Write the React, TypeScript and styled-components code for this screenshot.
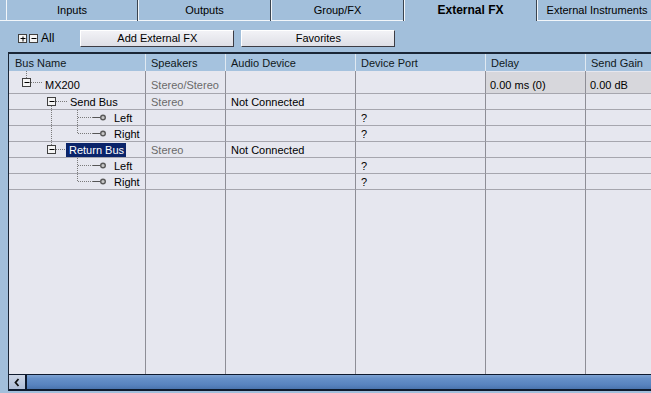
import React from 'react';
import styled, { createGlobalStyle, css } from 'styled-components';

const GlobalStyle = createGlobalStyle`
  html, body { margin: 0; padding: 0; }
  body {
    background: #a2bfdb;
    font-family: "Liberation Sans", Arial, sans-serif;
    font-size: 11px;
    color: #000;
    overflow: hidden;
  }
`;

const Window = styled.div`
  width: 651px;
  height: 393px;
  display: flex;
  flex-direction: column;
  overflow: hidden;
  padding-bottom: 2px;
  box-sizing: border-box;
`;

const TabBar = styled.div`
  display: flex;
  height: 21px;
  flex-shrink: 0;
  padding-left: 6px;
  box-shadow: inset 0 -1px 0 #f2f6fa;
`;

const Tab = styled.div<{ $active?: boolean; $w: number }>`
  width: ${p => p.$w}px;
  flex-shrink: 0;
  box-sizing: border-box;
  border-left: 1px solid #f2f6fa;
  border-right: 1px solid #3a4450;
  display: flex;
  align-items: center;
  justify-content: center;
  padding-bottom: 1px;
  white-space: nowrap;
  overflow: hidden;
  ${p =>
    p.$active &&
    css`
      background: #a2bfdb;
      font-weight: bold;
      font-size: 12px;
    `}
`;

const Toolbar = styled.div`
  display: flex;
  align-items: center;
  height: 16px;
  margin-top: 9px;
  padding-left: 18px;
  flex-shrink: 0;
`;

const AllLabel = styled.span`
  margin-left: 1px;
  font-size: 12px;
`;

const Button = styled.div<{ $gap: number }>`
  width: 154px;
  height: 17px;
  box-sizing: border-box;
  margin-left: ${p => p.$gap}px;
  background: linear-gradient(#f2f2f6, #dedfe6);
  border: 1px solid;
  border-color: #ffffff #3c3c44 #3c3c44 #ffffff;
  display: flex;
  align-items: center;
  justify-content: center;
`;

const Table = styled.div`
  margin-top: 6px;
  margin-left: 8px;
  width: 700px;
  flex: 1;
  display: flex;
  flex-direction: column;
  border-left: 1px solid #1a2636;
  border-top: 2px solid #1a2636;
  background: #e6e7ef;
`;

const cols = '137px 80px 130px 130px 100px 1fr';

const HeaderRow = styled.div`
  display: grid;
  grid-template-columns: ${cols};
  height: 17px;
  background: #a5c2de;
  flex-shrink: 0;
`;

const HeaderCell = styled.div<{ $pad?: number }>`
  border-right: 1px solid #dfe8f1;
  padding-left: ${p => p.$pad ?? 5}px;
  display: flex;
  align-items: center;
  color: #101820;
`;

const Row = styled.div<{ $h: number }>`
  display: grid;
  grid-template-columns: ${cols};
  height: ${p => p.$h}px;
  flex-shrink: 0;
`;

const Cell = styled.div<{ $tall?: boolean; $muted?: boolean }>`
  border-right: 1px solid #8e8e96;
  border-bottom: 1px solid #a6a6ae;
  padding-left: 5px;
  display: flex;
  align-items: center;
  white-space: nowrap;
  overflow: hidden;
  color: ${p => (p.$muted ? '#6a6a6a' : '#000')};
  ${p =>
    p.$tall &&
    css`
      align-items: flex-end;
      padding-bottom: 2px;
    `}
`;

const NameCell = styled(Cell)`
  padding-left: 0;
`;

const ValueCell = styled(Cell)`
  padding: 1px 0 0 0;
  align-items: stretch;
`;

const Field = styled.div`
  flex: 1;
  background: #d7d7dc;
  padding: 0 0 2px 4px;
  display: flex;
  align-items: flex-end;
`;

const Name = styled.span<{ $selected?: boolean }>`
  ${p =>
    p.$selected &&
    css`
      background: #0a246a;
      color: #fff;
      padding: 1px 2px 1px 3px;
    `}
`;

const Filler = styled.div`
  flex: 1;
  display: grid;
  grid-template-columns: ${cols};
`;

const FillCell = styled.div`
  border-right: 1px solid #8e8e96;
`;

const ScrollBar = styled.div`
  height: 17px;
  box-sizing: border-box;
  flex-shrink: 0;
  display: flex;
  border-top: 1px solid #0e1a2e;
  border-bottom: 2px solid #0e1a2e;
  background: linear-gradient(#7ea3d2 0%, #6690c8 25%, #5883bf 70%, #4a74ae 100%);
`;

const ArrowButton = styled.div`
  width: 16px;
  background: linear-gradient(#cdd6e6, #aebdd6);
  border-right: 2px solid #0e1a2e;
  display: flex;
  align-items: center;
  justify-content: center;
`;

const Box = ({ x, y, plus }: { x: number; y: number; plus?: boolean }) => (
  <g>
    <rect x={x} y={y} width={8} height={8} fill="#f4f4f4" stroke="#404040" />
    <line x1={x + 2} y1={y + 4} x2={x + 7} y2={y + 4} stroke="#000" />
    {plus && <line x1={x + 4.5} y1={y + 2} x2={x + 4.5} y2={y + 7} stroke="#000" />}
  </g>
);

const Dot = ({ x1, y1, x2, y2 }: { x1: number; y1: number; x2: number; y2: number }) => (
  <line x1={x1} y1={y1} x2={x2} y2={y2} stroke="#7a7a7a" strokeDasharray="1 1" />
);

const Port = () => (
  <g>
    <line x1={84} y1={7.5} x2={91} y2={7.5} stroke="#555" />
    <circle cx={94} cy={7.5} r={2.3} fill="#c8c8c8" stroke="#5a5a5a" strokeWidth={1.4} />
  </g>
);

type Kind = 'root' | 'bus' | 'lastBus' | 'port' | 'lastPort' | 'port2' | 'lastPort2';

const Tree = ({ kind }: { kind: Kind }) => {
  if (kind === 'root') {
    return (
      <svg width={36} height={22}>
        <Dot x1={17.5} y1={0} x2={17.5} y2={9} />
        <Box x={13.5} y={9.5} />
        <Dot x1={22} y1={13.5} x2={34} y2={13.5} />
      </svg>
    );
  }
  if (kind === 'bus' || kind === 'lastBus') {
    return (
      <svg width={kind === 'bus' ? 61 : 57} height={15}>
        {kind === 'bus' ? <Dot x1={42.5} y1={12} x2={42.5} y2={15} /> : <Dot x1={42.5} y1={0} x2={42.5} y2={3} />}
        <Box x={38.5} y={3.5} />
        <Dot x1={47} y1={7.5} x2={58} y2={7.5} />
      </svg>
    );
  }
  const busLine = kind === 'port' || kind === 'lastPort';
  const lastChild = kind === 'lastPort' || kind === 'lastPort2';
  return (
    <svg width={105} height={15}>
      {busLine && <Dot x1={42.5} y1={0} x2={42.5} y2={15} />}
      <Dot x1={68.5} y1={0} x2={68.5} y2={lastChild ? 7.5 : 15} />
      <Dot x1={69} y1={7.5} x2={84} y2={7.5} />
      <Port />
    </svg>
  );
};

interface BusRow {
  name: string;
  kind: Kind;
  speakers?: string;
  device?: string;
  port?: string;
  selected?: boolean;
}

const rows: BusRow[] = [
  { name: 'Send Bus', kind: 'bus', speakers: 'Stereo', device: 'Not Connected' },
  { name: 'Left', kind: 'port', port: '?' },
  { name: 'Right', kind: 'lastPort', port: '?' },
  { name: 'Return Bus', kind: 'lastBus', speakers: 'Stereo', device: 'Not Connected', selected: true },
  { name: 'Left', kind: 'port2', port: '?' },
  { name: 'Right', kind: 'lastPort2', port: '?' },
];

const tabs = [
  { label: 'Inputs', w: 132 },
  { label: 'Outputs', w: 133 },
  { label: 'Group/FX', w: 133 },
  { label: 'External FX', w: 133, active: true },
  { label: 'External Instruments', w: 120 },
];

const ToggleIcon = ({ plus }: { plus?: boolean }) => (
  <svg width={11} height={9} style={{ display: 'block' }}>
    <Box x={0.5} y={0.5} plus={plus} />
  </svg>
);

const App = () => {
  return (
    <Window>
      <GlobalStyle />
      <TabBar>
        {tabs.map(t => (
          <Tab key={t.label} $w={t.w} $active={t.active}>
            {t.label}
          </Tab>
        ))}
      </TabBar>
      <Toolbar>
        <ToggleIcon plus />
        <ToggleIcon />
        <AllLabel>All</AllLabel>
        <Button $gap={26}>Add External FX</Button>
        <Button $gap={7}>Favorites</Button>
      </Toolbar>
      <Table>
        <HeaderRow>
          <HeaderCell $pad={6}>Bus Name</HeaderCell>
          <HeaderCell>Speakers</HeaderCell>
          <HeaderCell>Audio Device</HeaderCell>
          <HeaderCell>Device Port</HeaderCell>
          <HeaderCell>Delay</HeaderCell>
          <HeaderCell>Send Gain</HeaderCell>
        </HeaderRow>
        <Row $h={23}>
          <NameCell $tall>
            <Tree kind="root" />
            <Name>MX200</Name>
          </NameCell>
          <Cell $tall $muted>Stereo/Stereo</Cell>
          <Cell $tall />
          <Cell $tall />
          <ValueCell>
            <Field>0.00 ms (0)</Field>
          </ValueCell>
          <ValueCell>
            <Field>0.00 dB</Field>
          </ValueCell>
        </Row>
        {rows.map((r, i) => (
          <Row $h={16} key={i}>
            <NameCell>
              <Tree kind={r.kind} />
              <Name $selected={r.selected}>{r.name}</Name>
            </NameCell>
            <Cell $muted>{r.speakers}</Cell>
            <Cell>{r.device}</Cell>
            <Cell>{r.port}</Cell>
            <Cell />
            <Cell />
          </Row>
        ))}
        <Filler>
          <FillCell />
          <FillCell />
          <FillCell />
          <FillCell />
          <FillCell />
          <FillCell />
        </Filler>
        <ScrollBar>
          <ArrowButton>
            <svg width={6} height={9}>
              <path d="M4.5 1 L1.5 4.5 L4.5 8" fill="none" stroke="#101010" strokeWidth={1.8} />
            </svg>
          </ArrowButton>
        </ScrollBar>
      </Table>
    </Window>
  );
};

export default App;
